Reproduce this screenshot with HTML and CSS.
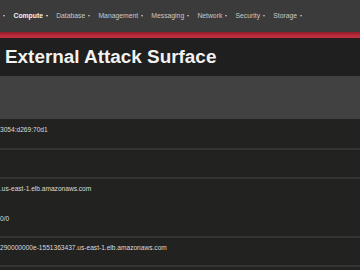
FILE: index.html
```html
<!DOCTYPE html>
<html>
<head>
<meta charset="utf-8">
<link rel="stylesheet" href="styles.css">
</head>
<body>
<nav class="navbar">
  <span class="caret first"></span>
  <span class="nav-item active">Compute<span class="caret"></span></span>
  <span class="nav-item">Database<span class="caret"></span></span>
  <span class="nav-item">Management<span class="caret"></span></span>
  <span class="nav-item">Messaging<span class="caret"></span></span>
  <span class="nav-item">Network<span class="caret"></span></span>
  <span class="nav-item">Security<span class="caret"></span></span>
  <span class="nav-item">Storage<span class="caret"></span></span>
</nav>
<div class="redbar"></div>
<header class="title-bar"><h1 class="title">External Attack Surface</h1></header>
<div class="band"></div>
<div class="table">
  <div class="row r1"><div class="cell">3054:d269:70d1</div></div>
  <div class="row r2"></div>
  <div class="row r3">
    <div class="cell">.us-east-1.elb.amazonaws.com</div>
    <div class="cell second">0/0</div>
  </div>
  <div class="row r4"><div class="cell">290000000e-1551363437.us-east-1.elb.amazonaws.com</div></div>
  <div class="row r5"></div>
</div>
</body>
</html>
```
FILE: styles.css
```css
html, body {
  margin: 0;
  padding: 0;
  background: #222220;
  font-family: "Liberation Sans", Arial, sans-serif;
  overflow: hidden;
}
.navbar {
  height: 32px;
  background: #3b3b3b;
  display: flex;
  align-items: center;
  padding-left: 3px;
  padding-bottom: 1px;
  box-sizing: border-box;
  color: #c8c8c8;
  font-size: 6.8px;
}
.nav-item {
  display: flex;
  align-items: center;
  margin-right: 8.4px;
  white-space: nowrap;
}
.nav-item.active {
  font-weight: bold;
  color: #f2f2f2;
}
.caret {
  display: inline-block;
  width: 0;
  height: 0;
  border-left: 1.7px solid transparent;
  border-right: 1.7px solid transparent;
  border-top: 2.2px solid currentColor;
  margin-left: 2.8px;
}
.caret.first {
  margin-left: 0;
  margin-right: 8.5px;
  color: #c8c8c8;
}
.redbar {
  height: 6px;
  background: linear-gradient(#8e1d29, #b92a3a 60%, #c03040);
}
.title-bar {
  height: 38px;
  background: #1f1f1f;
  display: flex;
  align-items: center;
  padding-left: 5px;
  box-sizing: border-box;
}
.title {
  margin: 0;
  font-size: 18.9px;
  font-weight: bold;
  color: #f2f2f2;
  line-height: 1;
  padding-top: 1px;
}
.band {
  height: 43px;
  background: #414141;
}
.row {
  background: #222220;
  border-bottom: 2px solid #343432;
  box-sizing: border-box;
}
.r1 { height: 31px; padding-top: 6px; }
.r2 { height: 29px; }
.r3 { height: 59px; padding-top: 5px; }
.r4 { height: 29px; padding-top: 5px; }
.r5 { height: 3px; border-bottom: none; }
.cell {
  font-size: 6.6px;
  line-height: 9px;
  color: #dcdcdc;
  padding-left: 0;
  white-space: nowrap;
}
.cell.second {
  margin-top: 21px;
}
```
